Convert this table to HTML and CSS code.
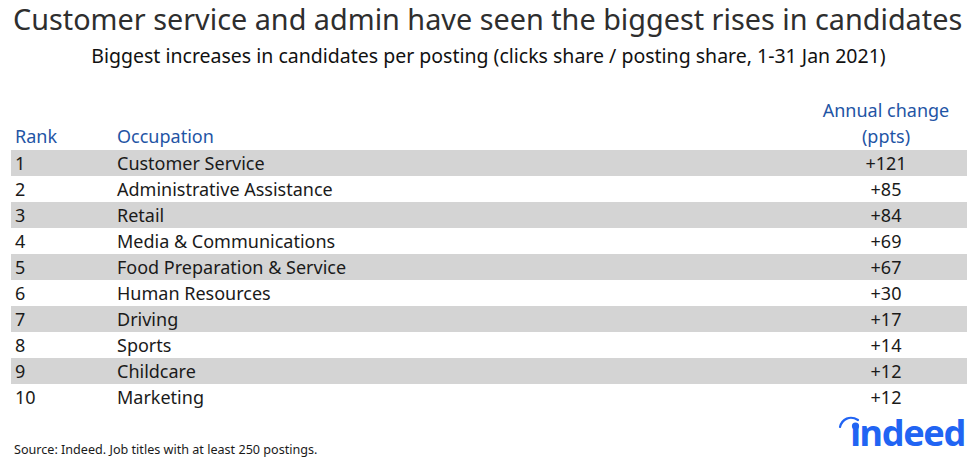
FILE: index.html
```html
<!DOCTYPE html>
<html lang="en">
<head>
<meta charset="utf-8">
<link rel="stylesheet" href="styles.css">
</head>
<body>
<div class="page">
  <h1 class="title">Customer service and admin have seen the biggest rises in candidates</h1>
  <p class="subtitle">Biggest increases in candidates per posting (clicks share / posting share, 1-31 Jan 2021)</p>
  <div class="table">
    <div class="row head">
      <div class="rank">Rank</div>
      <div class="occ">Occupation</div>
      <div class="val">Annual change<br>(ppts)</div>
    </div>
    <div class="row shade"><div class="rank">1</div><div class="occ">Customer Service</div><div class="val">+121</div></div>
    <div class="row"><div class="rank">2</div><div class="occ">Administrative Assistance</div><div class="val">+85</div></div>
    <div class="row shade"><div class="rank">3</div><div class="occ">Retail</div><div class="val">+84</div></div>
    <div class="row"><div class="rank">4</div><div class="occ">Media &amp; Communications</div><div class="val">+69</div></div>
    <div class="row shade"><div class="rank">5</div><div class="occ">Food Preparation &amp; Service</div><div class="val">+67</div></div>
    <div class="row"><div class="rank">6</div><div class="occ">Human Resources</div><div class="val">+30</div></div>
    <div class="row shade"><div class="rank">7</div><div class="occ">Driving</div><div class="val">+17</div></div>
    <div class="row"><div class="rank">8</div><div class="occ">Sports</div><div class="val">+14</div></div>
    <div class="row shade"><div class="rank">9</div><div class="occ">Childcare</div><div class="val">+12</div></div>
    <div class="row"><div class="rank">10</div><div class="occ">Marketing</div><div class="val">+12</div></div>
  </div>
  <div class="footer">
    <div class="source">Source: Indeed. Job titles with at least 250 postings.</div>
    <div class="logo">
      <svg class="logo-mark" width="26" height="20" viewBox="0 0 26 20">
        <path d="M4 14 C 6 6, 14 2, 22 7" fill="none" stroke="#2164f3" stroke-width="2.2" stroke-linecap="round"/>
        <circle cx="19.5" cy="13" r="3.6" fill="#2164f3"/>
      </svg>
      <span class="logo-text">ındeed</span>
    </div>
  </div>
</div>
</body>
</html>
```
FILE: styles.css
```css
html, body {
  margin: 0;
  padding: 0;
  background: #ffffff;
}
.page {
  width: 977px;
  height: 463px;
  font-family: "Noto Sans", "Open Sans", sans-serif;
  color: #1a1a1a;
}
.title {
  margin: 0;
  padding: 0 0 0 13px;
  font-size: 28.8px;
  font-weight: 400;
  line-height: 38px;
  color: #2e2e2e;
  white-space: nowrap;
}
.subtitle {
  margin: 0;
  font-size: 19.5px;
  line-height: 35px;
  text-align: center;
  color: #111;
  white-space: nowrap;
}
.table {
  margin: 24px 10px 0 11px;
}
.row {
  display: grid;
  grid-template-columns: 106px 1fr 160px;
  height: 26px;
  align-items: center;
  font-size: 18px;
  line-height: 26px;
}
.row.head {
  height: auto;
  align-items: end;
  color: #1f55a5;
  line-height: 26px;
  padding-bottom: 1px;
}
.row.shade {
  background: #d4d4d4;
}
.rank {
  padding-left: 4px;
}
.val {
  text-align: center;
  padding-right: 2px;
}
.footer {
  display: flex;
  justify-content: space-between;
  align-items: flex-end;
  margin-top: 3px;
  padding: 0 12px 0 14px;
}
.source {
  font-size: 12.6px;
  line-height: 18px;
  color: #1a1a1a;
}
.logo {
  position: relative;
  padding-bottom: 6px;
}
.logo-mark {
  position: absolute;
  left: -14px;
  top: 0;
}
.logo-text {
  display: block;
  font-family: "Noto Sans", sans-serif;
  font-weight: 700;
  font-size: 36px;
  line-height: 40px;
  color: #2164f3;
  letter-spacing: -1.3px;
}
```
